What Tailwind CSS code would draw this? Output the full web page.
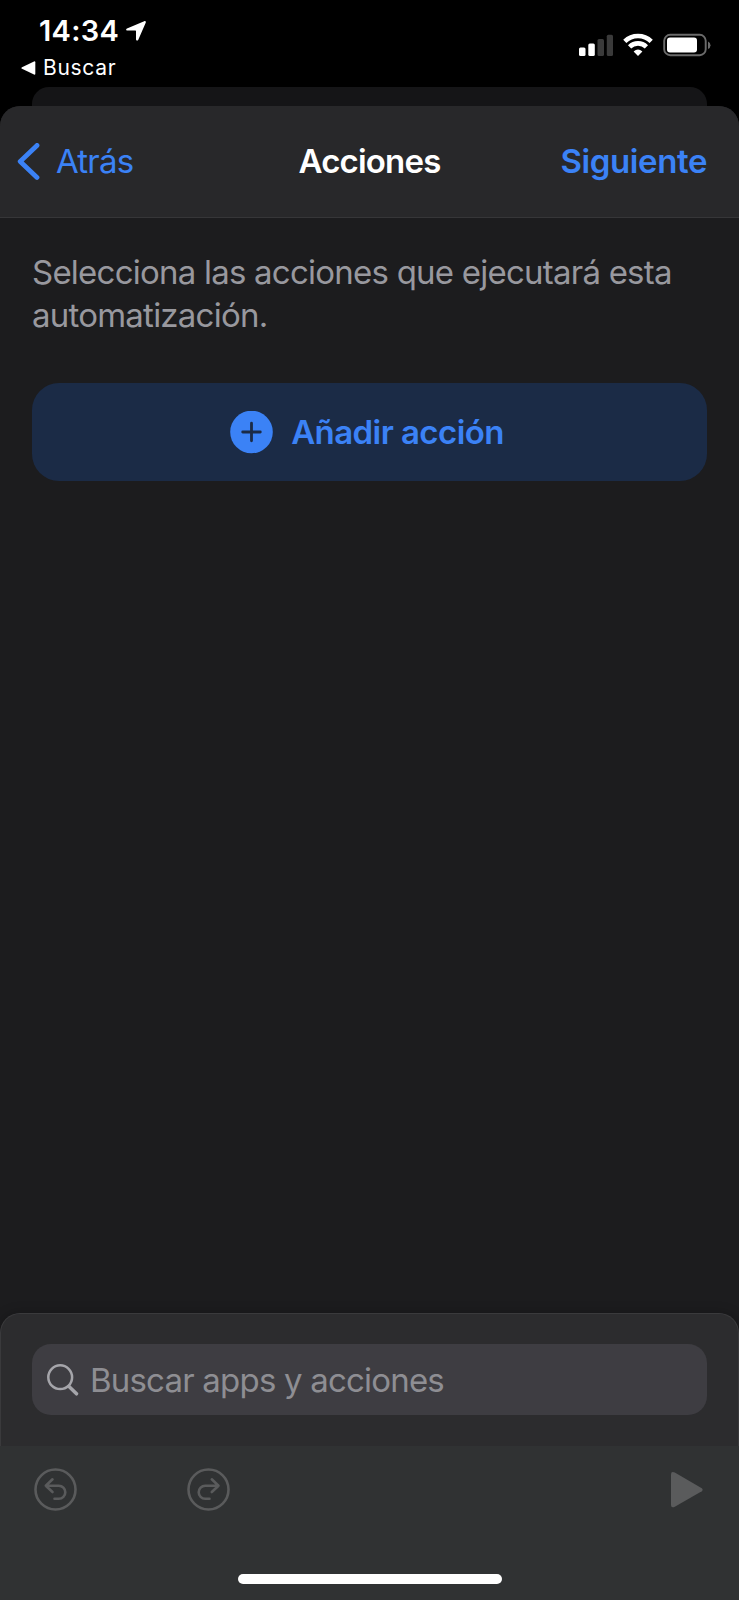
<!DOCTYPE html>
<html lang="es">
<head>
  <meta charset="UTF-8" />
  <meta name="viewport" content="width=device-width, initial-scale=1.0"/>
  <title>Acciones</title>
  <script src="https://cdn.jsdelivr.net/npm/@tailwindcss/browser@4"></script>
</head>

<body class="w-[739px] h-[1600px] bg-black font-['Inter','Liberation_Sans',sans-serif] text-white overflow-hidden flex flex-col">

  <!-- Status bar -->
  <div class="h-[87px] shrink-0 flex justify-between">
    <div class="pt-[15px]">
      <div class="flex items-center h-8 pl-[39px]">
        <span class="text-[29px] leading-8 font-semibold tracking-[0.3px]">14:34</span>
        <svg class="w-5 h-5 ml-[7px]" viewBox="0 0 20 20" fill="#fff">
          <path d="M18.2.2 1 7.4C-.3 8-.1 9.500 1.300 9.500H9.400a.6.6 0 0 1 .6.6V18.300c0 1.400 1.700 1.700 2.300.4L19.700 1.800C20.200.6 19.300-.3 18.200.2Z" />
        </svg>
      </div>
      <div class="flex items-center h-8 pl-[21px] mt-[5px]">
        <svg class="w-[15px] h-[15px]" viewBox="0 0 15 15" fill="#fff">
          <path d="M13 .4 1 6.200Q-.3 7 1 7.800L13 13.600Q14.300 14.100 14.300 12.800V1.200Q14.300 0 13 .4Z" />
        </svg>
        <span class="ml-[7px] text-[21px] leading-8 tracking-[0.7px]">Buscar</span>
      </div>
    </div>

    <div class="flex gap-[10px] pt-[33px] pr-[27px]">
      <!-- Signal -->
      <svg class="w-[34px] h-6" viewBox="0 0 34 24">
        <rect x="0" y="14.500" width="6.500" height="8.500" rx="1.500" fill="#fff" />
        <rect x="9.300" y="10.500" width="6.500" height="12.500" rx="1.500" fill="#fff" />
        <rect x="18.500" y="6" width="6.500" height="17" rx="1.500" fill="#3a3a3a" />
        <rect x="27.800" y="1.700" width="6.200" height="21.300" rx="1.500" fill="#3a3a3a" />
      </svg>
      <!-- Wifi -->
      <svg class="w-[30px] h-6" viewBox="0 0 30 24" fill="none" stroke="#fff" stroke-width="4.600">
        <path d="M1.800 8.300A19 19 0 0 1 28.200 8.300" />
        <path d="M6.600 13.800A12 12 0 0 1 23.400 13.800" />
        <path d="M15 23 10.600 18.500Q15 14.600 19.400 18.500Z" fill="#fff" stroke="none" />
      </svg>
      <!-- Battery -->
      <svg class="w-[49px] h-6" viewBox="0 0 49 24">
        <rect x="1.200" y="1.800" width="41.500" height="20.400" rx="6" fill="none" stroke="#6b6b6b" stroke-width="1.900" />
        <rect x="4" y="4.500" width="30" height="15" rx="3" fill="#fff" />
        <path d="M45 8.500Q47.500 9.500 47.500 12.200T45 16Z" fill="#6b6b6b" />
      </svg>
    </div>
  </div>

  <!-- Sheet behind -->
  <div class="h-[19px] shrink-0 mx-8 rounded-t-[17px] bg-[#151517]"></div>

  <!-- Main sheet -->
  <main class="flex-1 flex flex-col rounded-t-[20px] bg-[#1c1c1e] overflow-hidden">
    <header class="h-[112px] shrink-0 grid grid-cols-3 items-center bg-[#28282a] border-b border-[#363638] px-8 text-[33px]">
      <a class="-ml-[15px] flex items-center text-[#3b82f6]">
        <svg class="w-[24px] h-[38px]" viewBox="0 0 24 38" fill="none" stroke="#3b82f6" stroke-width="4.800" stroke-linecap="round" stroke-linejoin="round">
          <path d="M20 2.400 3.200 18.400 20 34.400" />
        </svg>
        <span class="ml-[15px] tracking-[-0.8px]">Atrás</span>
      </a>
      <h1 class="text-center font-semibold tracking-[-0.8px]">Acciones</h1>
      <a class="text-right font-semibold tracking-[-0.4px] text-[#3b82f6]">Siguiente</a>
    </header>

    <section class="flex-1 px-8 pt-[33px]">
      <p class="text-[33px] leading-[43px] tracking-[-0.77px] text-[#98989e]">Selecciona las acciones que ejecutará esta<br />automatización.</p>
      <button class="mt-[46px] w-full h-[98px] rounded-[27px] bg-[#1b2b46] flex items-center justify-center pr-[5px] text-[33px] font-semibold text-[#3b82f6]">
        <svg class="w-[43px] h-[43px] mr-[18px]" viewBox="0 0 43 43">
          <circle cx="21.500" cy="21" r="21.300" fill="#3b82f6" />
          <path d="M21.500 12.200V29.800M12.700 21H30.300" stroke="#1b2b46" stroke-width="2.800" stroke-linecap="round" />
        </svg>
        <span class="pt-[2px] tracking-[-0.57px]">Añadir acción</span>
      </button>
    </section>

    <!-- Search panel -->
    <div class="h-[133px] shrink-0 rounded-t-[20px] bg-[#2c2c2e] border border-b-0 border-[#3a3a3c] px-[31px] pt-[30px] shadow-[0_0_12px_rgba(0,0,0,0.25)]">
      <div class="h-[71px] rounded-[19px] bg-[#3e3d42] flex items-center pl-[15px]">
        <svg class="w-8 h-8" viewBox="0 0 32 32" fill="none" stroke="#a5a5aa" stroke-linecap="round">
          <circle cx="13.200" cy="13.200" r="11.900" stroke-width="2.500" />
          <path d="M22 22.500 29.500 29.800" stroke-width="3.500" />
        </svg>
        <span class="pt-[2px] ml-[11px] text-[33px] tracking-[-0.8px] text-[#8e8e93]">Buscar apps y acciones</span>
      </div>
    </div>

    <!-- Toolbar -->
    <footer class="h-[154px] shrink-0 bg-[#303233] flex flex-col justify-between items-center">
      <div class="w-full flex items-center pl-[34px] pr-[36px] pt-[22px]">
        <svg class="w-[43px] h-[43px]" viewBox="0 0 43 43" fill="none" stroke="#5a5b5c" stroke-width="2.600" stroke-linecap="round" stroke-linejoin="round">
          <circle cx="21.500" cy="21.500" r="20" />
          <path d="M18.500 11.300 11.800 17.700 18.500 24M11.800 17.700H24.800A6.500 6.500 0 0 1 24.800 30.700H20.500" />
        </svg>
        <svg class="w-[43px] h-[43px] ml-[110px]" viewBox="0 0 43 43" fill="none" stroke="#5a5b5c" stroke-width="2.600" stroke-linecap="round" stroke-linejoin="round">
          <circle cx="21.500" cy="21.500" r="20" />
          <path d="M24.800 11.300 31.500 17.700 24.800 24M31.500 17.700H18.200A6.500 6.500 0 0 0 18.200 30.700H22.500" />
        </svg>
        <svg class="w-8 h-9 ml-auto" viewBox="0 0 32 36" fill="#5a5b5c">
          <path d="M3.800.6 30.800 16.200Q32.500 17.700 30.800 19.200L3.800 34.800Q0 36.500 0 33V2.500Q0-1 3.800.6Z" />
        </svg>
      </div>
      <div class="w-[264px] h-[10px] mb-[16px] rounded-full bg-white"></div>
    </footer>
  </main>

</body>
</html>
